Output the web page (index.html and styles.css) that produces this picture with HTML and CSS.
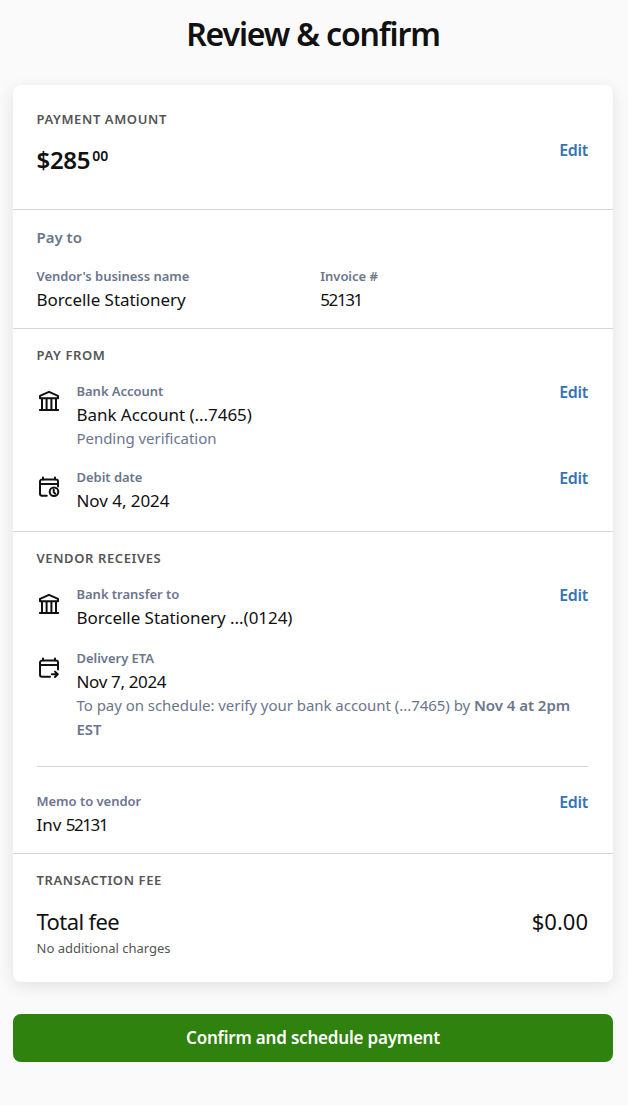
FILE: index.html
```html
<!DOCTYPE html>
<html lang="en">
<head>
    <meta charset="UTF-8">
    <meta name="viewport" content="width=device-width, initial-scale=1.0">
    <title>Review &amp; confirm</title>
    <link rel="stylesheet" href="styles.css">
</head>
<body>

<!-- Shared icons -->
<svg class="icon-defs" xmlns="http://www.w3.org/2000/svg">
    <symbol id="icon-bank" viewBox="0 0 24 24">
        <path d="M2.8 21h18.4M3 9.2h18M5 9.2V21M9.6 9.2V21M14.4 9.2V21M19 9.2V21M3 9.2V6.9l9-4.1 9 4.1v2.3"/>
    </symbol>
    <symbol id="icon-date" viewBox="0 0 24 24">
        <path d="M6 2.6v2.2M18 2.6v2.2M3 9h18M9.8 20.8H5a2 2 0 0 1-2-2V6.6a2 2 0 0 1 2-2h14a2 2 0 0 1 2 2v4.8"/>
        <circle cx="17" cy="16.8" r="4.3"/>
        <path d="M16.7 14.5v2.5l1.4 1.7"/>
    </symbol>
    <symbol id="icon-delivery" viewBox="0 0 24 24">
        <path d="M6 2.6v2.2M18 2.6v2.2M3 9h18M13 20.8H5a2 2 0 0 1-2-2V6.6a2 2 0 0 1 2-2h14a2 2 0 0 1 2 2v7M14.8 18.3h6M18 15.6l2.8 2.7-2.8 2.7"/>
    </symbol>
</svg>

<h1>Review &amp; confirm</h1>

<div class="card">
    <section class="amount-section">
        <div>
            <h2>PAYMENT AMOUNT</h2>
            <p class="amount">$285<span class="cents">00</span></p>
        </div>
        <a href="#" class="edit">Edit</a>
    </section>

    <section class="pay-to">
        <h3>Pay to</h3>
        <div class="columns">
            <div>
                <p class="label">Vendor's business name</p>
                <p class="value">Borcelle Stationery</p>
            </div>
            <div>
                <p class="label">Invoice #</p>
                <p class="value number">52131</p>
            </div>
        </div>
    </section>

    <section class="pay-from">
        <h2>PAY FROM</h2>
        <div class="row">
            <svg class="icon"><use href="#icon-bank"/></svg>
            <div class="details">
                <p class="label">Bank Account</p>
                <p class="value">Bank Account (...7465)</p>
                <p class="note">Pending verification</p>
            </div>
            <a href="#" class="edit">Edit</a>
        </div>
        <div class="row">
            <svg class="icon"><use href="#icon-date"/></svg>
            <div class="details">
                <p class="label">Debit date</p>
                <p class="value">Nov 4, 2024</p>
            </div>
            <a href="#" class="edit">Edit</a>
        </div>
    </section>

    <section class="receives">
        <h2>VENDOR RECEIVES</h2>
        <div class="row">
            <svg class="icon"><use href="#icon-bank"/></svg>
            <div class="details">
                <p class="label">Bank transfer to</p>
                <p class="value">Borcelle Stationery ...(0124)</p>
            </div>
            <a href="#" class="edit">Edit</a>
        </div>
        <div class="row">
            <svg class="icon"><use href="#icon-delivery"/></svg>
            <div class="details">
                <p class="label">Delivery ETA</p>
                <p class="value date">Nov 7, 2024</p>
                <p class="note">To pay on schedule: verify your bank account (...7465) by <strong>Nov 4 at 2pm EST</strong></p>
            </div>
        </div>
        <div class="row memo">
            <div class="details">
                <p class="label">Memo to vendor</p>
                <p class="value">Inv <span class="number">52131</span></p>
            </div>
            <a href="#" class="edit">Edit</a>
        </div>
    </section>

    <section class="fee">
        <h2>TRANSACTION FEE</h2>
        <div class="total">
            <span class="total-label">Total fee</span>
            <span>$0.00</span>
        </div>
        <p class="fee-note">No additional charges</p>
    </section>
</div>

<button type="button" class="confirm-btn">Confirm and schedule payment</button>

</body>
</html>
```
FILE: styles.css
```css
* {
    box-sizing: border-box;
}
body {
    margin: 0;
    padding: 14px 15px 43px 13px;
    background-color: #fafafa;
    color: #111;
    font-family: "Noto Sans", sans-serif;
    font-size: 17px;
    line-height: 24px;
}
h1, h2, h3, p {
    margin: 0;
}
h1 {
    margin-bottom: 31px;
    font-size: 32px;
    font-weight: 600;
    line-height: 40px;
    letter-spacing: -1.15px;
    text-align: center;
}
h2 {
    color: #555;
    font-size: 13px;
    font-weight: 600;
    line-height: 24px;
    letter-spacing: 0.6px;
}
h3 {
    color: #6b768c;
    font-size: 15px;
    font-weight: 600;
    line-height: 22px;
}
.icon-defs {
    display: none;
}
.card {
    border-radius: 8px;
    background-color: #fff;
    box-shadow: 0 4px 16px rgba(0, 0, 0, 0.1);
}
section {
    padding: 14px 25px 18px 23.5px;
    border-bottom: 1px solid #d4d7dc;
}
section:last-child {
    border-bottom: none;
}
.amount-section {
    display: flex;
    justify-content: space-between;
    align-items: flex-start;
    height: 125px;
    padding-top: 22px;
}
.amount-section .edit {
    margin-top: 31px;
}
.amount {
    display: flex;
    gap: 2px;
    margin-top: 13px;
    font-size: 24px;
    font-weight: 600;
    line-height: 32px;
    letter-spacing: -0.3px;
}
.cents {
    font-size: 14px;
    line-height: 24px;
    letter-spacing: 0;
}
.edit {
    color: #3574b5;
    font-size: 16px;
    font-weight: 600;
    letter-spacing: -0.3px;
    text-decoration: none;
}
.pay-to {
    padding-top: 16px;
    padding-bottom: 16px;
}
.columns {
    display: grid;
    grid-template-columns: 1fr 1fr;
    gap: 16px;
    margin-top: 16px;
}
.label {
    color: #6b768c;
    font-size: 13px;
    font-weight: 600;
    letter-spacing: -0.03px;
}
.value {
    letter-spacing: -0.05px;
}
.number {
    letter-spacing: -1.4px;
}
.date {
    letter-spacing: -0.35px;
}
.note {
    margin-top: -1px;
    color: #6b768c;
    font-size: 15px;
    letter-spacing: -0.04px;
}
.note strong {
    font-weight: 600;
}
.row {
    display: flex;
    gap: 16px;
    margin-top: 14px;
}
h2 + .row {
    margin-top: 12px;
}
.pay-from .row + .row {
    margin-top: 15px;
}
.row .edit {
    margin-top: 1px;
}
.details {
    flex: 1;
}
.icon {
    width: 24px;
    height: 24px;
    margin-top: 10px;
    fill: none;
    stroke: #111;
    stroke-width: 2;
    stroke-linecap: round;
    stroke-linejoin: round;
}
.receives {
    padding-bottom: 16px;
}
.receives .row + .row {
    margin-top: 16px;
}
.receives .row + .memo {
    margin-top: 25px;
    padding-top: 22px;
    border-top: 1px solid #d4d7dc;
}
.fee {
    padding-bottom: 24px;
}
.total {
    display: flex;
    justify-content: space-between;
    margin-top: 13px;
    font-size: 22px;
    line-height: 32px;
}
.total-label {
    letter-spacing: -0.6px;
}
.fee-note {
    margin-top: 1px;
    color: #555;
    font-size: 13px;
    line-height: 20px;
}
.confirm-btn {
    display: block;
    width: 100%;
    height: 48px;
    margin-top: 32px;
    padding-bottom: 3px;
    border: none;
    border-radius: 8px;
    background-color: #2e820d;
    color: #fff;
    font-family: inherit;
    font-size: 17px;
    font-weight: 600;
    letter-spacing: -0.2px;
    cursor: pointer;
}
```
